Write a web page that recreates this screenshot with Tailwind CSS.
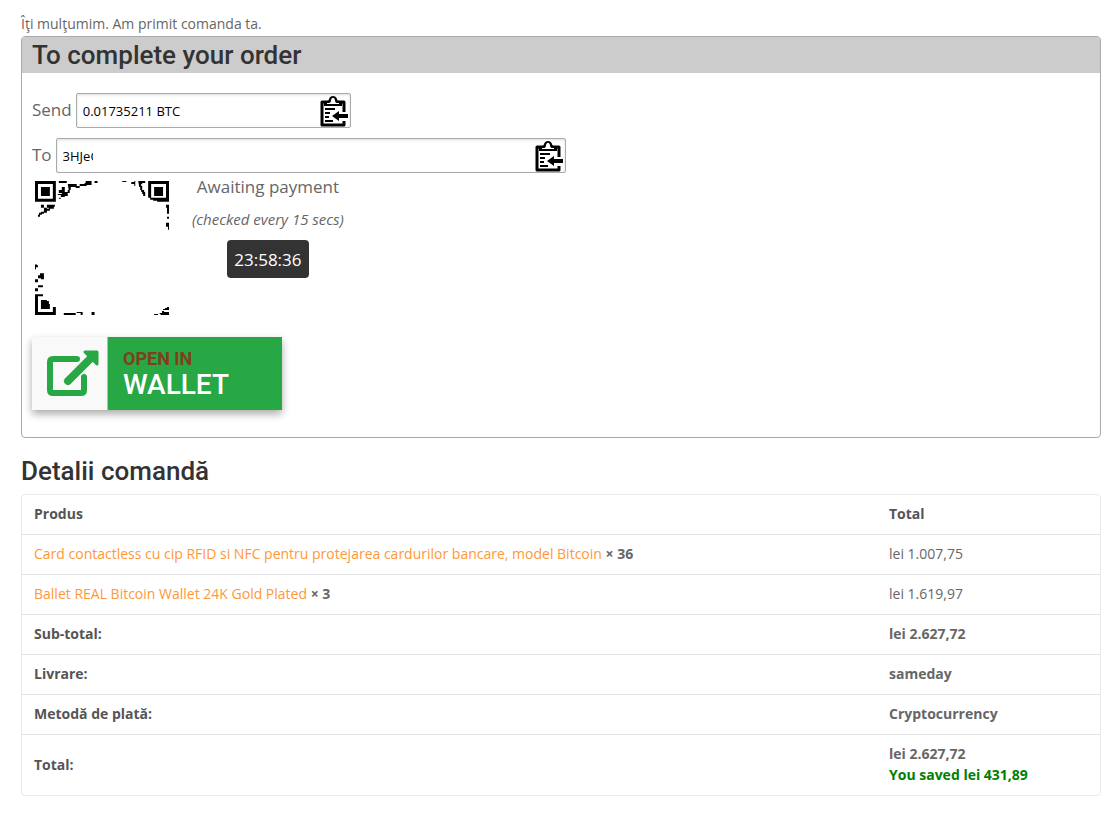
<!DOCTYPE html>
<html lang="en">
<head>
  <meta charset="UTF-8">
  <meta name="viewport" content="width=device-width, initial-scale=1.0">
  <title>Comandă primită</title>
  <script src="https://cdn.jsdelivr.net/npm/@tailwindcss/browser@4"></script>
</head>
<body class="bg-white font-['Open_Sans',sans-serif] text-sm text-[#666]">
  <svg class="hidden">
    <!-- Clipboard icon, shared by both copy buttons -->
    <symbol id="clipboard" viewBox="0 0 29 32">
      <path d="M25 16V6H3v23h22v-4" fill="none" stroke="#000" stroke-width="3" stroke-linejoin="round"/>
      <path d="M5 10V5h3q2 0 2-2c1-4 7-4 8 0q0 2 2 2h3v5z"/>
      <path d="M8 7h2q2 0 2-3c1-3 3-3 4 0q0 3 2 3h2v1H8z" fill="#fff"/>
      <path d="M6 13h10M6 17h5M6 21h4M6 25h8" stroke="#000" stroke-width="2"/>
      <path d="M13 20l7-5v3h9v4h-9v3z"/>
    </symbol>
  </svg>

  <main class="pl-[21px] pr-4 pt-3 pb-4">
    <p class="leading-6">Îţi mulţumim. Am primit comanda ta.</p>

    <!-- Payment box -->
    <section class="border border-[#aaa] rounded">
      <h2 class="bg-[#ccc] px-[10px] font-[Roboto] font-medium text-[26px] leading-9 text-[#333]">To complete your order</h2>
      <div class="px-[10px] pt-5 pb-[27px] text-[17px]">
        <div class="flex items-center gap-1 mb-[10px]">
          <label for="amount">Send</label>
          <div class="relative">
            <input id="amount" type="text" readonly value="0.01735211 BTC" class="block w-[275px] h-[35px] pl-[6px] pr-9 border border-[#aaa] rounded-xs shadow-[inset_0_1px_3px_#ddd] text-[13px] text-black">
            <button type="button" aria-label="Copy amount" class="absolute right-[3px] top-[3px]"><svg class="block w-[29px] h-8"><use href="#clipboard"/></svg></button>
          </div>
        </div>
        <div class="flex items-center gap-1">
          <label for="address">To</label>
          <div class="relative">
            <input id="address" type="text" readonly value="3HJeC" class="block w-[510px] h-[35px] pl-[6px] pr-[472px] border border-[#aaa] rounded-xs shadow-[inset_0_1px_3px_#ddd] text-[13px] text-black">
            <button type="button" aria-label="Copy address" class="absolute right-[3px] top-[3px]"><svg class="block w-[29px] h-8"><use href="#clipboard"/></svg></button>
          </div>
        </div>

        <div class="flex gap-[23px] pl-[3px]">
          <!-- QR code -->
          <svg class="w-[134px] h-[134px] mt-2" viewBox="0 0 135 135">
            <path fill-rule="evenodd" d="M0 0h21v21H0zM3 3v15h15V3zM6 6h9v9H6z"/>
            <path fill-rule="evenodd" d="M114 0h21v21h-12v-1h-4v-1h-3v-2h-2zM117 3v14h15V3zM120 6h9v9h-9z"/>
            <path d="M24 0h8v2h-8zM27 6h3v3h-3zM33 3h9v3h-6v3h-1v3h-2v3h-3v1h-4v-2h-3v-1h4v-2h6V9h1zM24 9h6v3h-6zM24 17h2v1h-2zM41 5h4v2h-4zM45 3h5V2h1V0h6v4h-5v1h-7zM60 0h3v2h-3z"/>
            <path d="M6 24h3v3H6zM12 24h8v2h-1v2h-5v-1h-2zM9 27h3v1h3v2h-3v2H9v1H7v1H5v2H3v-2h1v-2h2v-1h3z"/>
            <path d="M88 0h4v1h-4zM97 1h3V0h1v5h-1V3h-3zM104 0h7v2h-3v1h-1v2h1v4h2v2h1v4h-2v-2h-1v-2h-1V9h-1V6h-1zM132 24h3v9h-2v-6h-1zM133 36h2v2h-2zM132 42h3v7h-1v-3h-2z"/>
            <path d="M0 84h2v1h1v2H1v2H0zM5 93h4v6H6v-1H3v-3h2zM0 99h3v3H0zM3 105h5v2H3zM0 108h3v3H0z"/>
            <path d="M0 114h8v2H3v16h15v-5h3v8H0zM6 120h6v1h2v3h1v5H6zM29 133h12v2H29zM42 132h6v3h-2v-2h-4zM57 132h3v3h-3zM120 134h4v1h-4zM125 133h3v-2h2v1h5v3h-8zM129 129h2v-1h2v-1h2v3h-6z"/>
          </svg>
          <div class="flex flex-col items-center">
            <p class="leading-7">Awaiting payment</p>
            <p class="text-[15px] italic leading-[37px] mb-[2px]">(checked every 15 secs)</p>
            <time class="bg-[#333] text-white rounded px-[7px] pt-[2px] leading-9">23:58:36</time>
          </div>
        </div>

        <a href="#" class="flex w-[250px] h-[73px] mt-[22px] font-[Roboto] bg-[#28a745] shadow-[0_4px_8px_#0005]">
          <span class="flex w-[76px] bg-[#f9f9f9] border-r border-[#94d3a2]">
            <svg class="w-[75px] h-[73px]" viewBox="0 0 75 73" fill="none" stroke="#28a745" stroke-width="6" stroke-linecap="round" stroke-linejoin="round">
              <path d="M45 22H21q-3 0-3 3v28q0 3 3 3h28q3 0 3-3V40"/>
              <path d="M36 44l22-22" stroke-width="8"/>
              <path d="M53 15h12v12z" fill="#28a745" stroke-width="3"/>
            </svg>
          </span>
          <span class="flex flex-col pl-[15px] pt-3">
            <span class="text-[18px] leading-5 font-bold text-[#7f3f1b]">OPEN IN</span>
            <span class="text-[28px] leading-8 font-medium text-white">WALLET</span>
          </span>
        </a>
      </div>
    </section>

    <!-- Order details -->
    <h2 class="mt-[15px] mb-[5px] font-[Roboto] font-medium text-[26px] leading-9 text-[#333]">Detalii comandă</h2>
    <table class="w-full border-separate border-spacing-0 border border-[#eaeaea] rounded text-left leading-[21px] [&_th]:px-3 [&_th]:pt-2 [&_th]:pb-[10px] [&_td]:px-3 [&_td]:pt-2 [&_td]:pb-[10px] [&_th]:text-[#555]">
      <thead>
        <tr>
          <th>Produs</th>
          <th class="w-[223px]">Total</th>
        </tr>
      </thead>
      <tbody class="[&_td]:border-t [&_td]:border-[#e2e2e2]">
        <tr>
          <td><a href="#" class="text-[#ff9838]">Card contactless cu cip RFID si NFC pentru protejarea cardurilor bancare, model Bitcoin</a> <strong>× 36</strong></td>
          <td>lei 1.007,75</td>
        </tr>
        <tr>
          <td><a href="#" class="text-[#ff9838]">Ballet REAL Bitcoin Wallet 24K Gold Plated</a> <strong>× 3</strong></td>
          <td>lei 1.619,97</td>
        </tr>
      </tbody>
      <tfoot class="font-bold [&_th]:border-t [&_td]:border-t [&_th]:border-[#e2e2e2] [&_td]:border-[#e2e2e2]">
        <tr>
          <th>Sub-total:</th>
          <td>lei 2.627,72</td>
        </tr>
        <tr>
          <th>Livrare:</th>
          <td>sameday</td>
        </tr>
        <tr>
          <th>Metodă de plată:</th>
          <td>Cryptocurrency</td>
        </tr>
        <tr>
          <th>Total:</th>
          <td>lei 2.627,72<p class="text-[#008000]">You saved lei 431,89</p></td>
        </tr>
      </tfoot>
    </table>
  </main>
</body>
</html>
